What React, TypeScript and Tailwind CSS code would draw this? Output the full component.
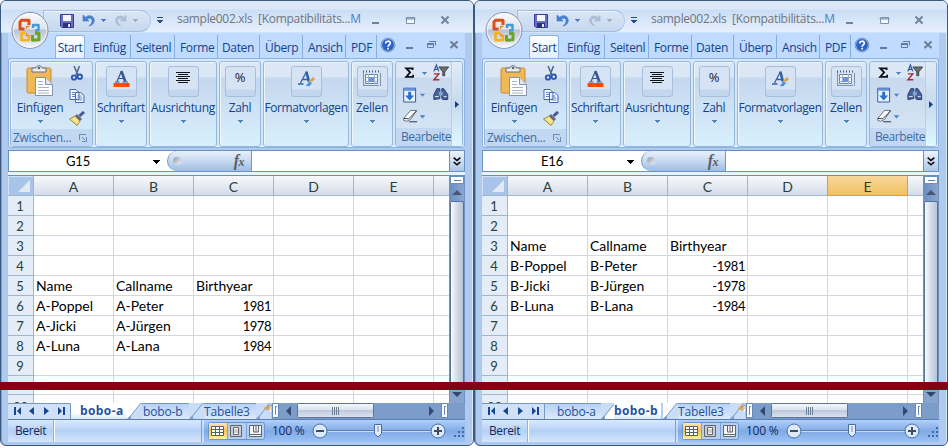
import React from 'react';

const UI = "font-['Open_Sans','Noto_Sans',sans-serif]";
const CELL = "font-['Lato',sans-serif]";

type SheetData = {
  cell: string;
  active: number;
  activeCol: string;
  start: number;
  rows: [string, string, string][];
};

const LEFT: SheetData = {
  cell: 'G15',
  active: 0,
  activeCol: '',
  start: 5,
  rows: [
    ['Name', 'Callname', 'Birthyear'],
    ['A-Poppel', 'A-Peter', '1981'],
    ['A-Jicki', 'A-Jürgen', '1978'],
    ['A-Luna', 'A-Lana', '1984'],
  ],
};

const RIGHT: SheetData = {
  cell: 'E16',
  active: 1,
  activeCol: 'E',
  start: 3,
  rows: [
    ['Name', 'Callname', 'Birthyear'],
    ['B-Poppel', 'B-Peter', '-1981'],
    ['B-Jicki', 'B-Jürgen', '-1978'],
    ['B-Luna', 'B-Lana', '-1984'],
  ],
};

function Down({ className = 'text-[#4f7fbd]' }: { className?: string }) {
  return (
    <svg width="5" height="3" viewBox="0 0 5 3" className={`shrink-0 ${className}`} shapeRendering="crispEdges">
      <path d="M0 0h5v1H0zM1 1h3v1H1zM2 2h1v1H2z" fill="currentColor" />
    </svg>
  );
}

function OfficeButton() {
  return (
    <svg width="38" height="38" viewBox="0 0 38 38" className="absolute left-[10px] top-[10px] z-10">
      <defs>
        <linearGradient id="orb" x1="0" y1="0" x2="0" y2="1">
          <stop offset="0" stopColor="#f8fafc" />
          <stop offset=".45" stopColor="#dfe4ec" />
          <stop offset=".5" stopColor="#b9c3d3" />
          <stop offset="1" stopColor="#f6fafe" />
        </linearGradient>
      </defs>
      <circle cx="19" cy="19.4" r="18" fill="url(#orb)" stroke="#8591a8" />
      <circle cx="19" cy="19.4" r="16.8" fill="none" stroke="#fff" strokeOpacity=".7" />
      <g fill="none" strokeWidth="3" strokeLinejoin="round">
        <path d="M13.500 18H9v-7l1.500-1.800h7.500V14" stroke="#dc4f16" />
        <path d="M22 17v-3h5.500v5.500H24" stroke="#3f9bd8" strokeWidth="2.400" />
        <path d="M14.500 22h-4v7.300h7.500V24" stroke="#f4b31c" strokeWidth="2.600" />
        <path d="M21.500 24v5.300l6.500-.5v-6.300h-4" stroke="#69a52b" />
        <path d="M15.500 18v-2.500h3M15.500 22v2.500h3" stroke="#e98a2b" strokeWidth="1.300" />
      </g>
    </svg>
  );
}

function TitleBar() {
  return (
    <div className="relative flex h-8 shrink-0 items-center border-b border-[#cfe3fb] bg-linear-to-b from-[#dce8f8] from-[8px] via-[#cbdef6] via-[9px] to-[#e6f0fc]">
      <div className="ml-[42px] mt-[8px] flex h-[22px] w-[108px] shrink-0 items-center rounded-r-full rounded-tl-[6px] border border-[#a4bfe2] border-r-[#b5caea] bg-linear-to-b from-[#dae6f6] to-[#c6d8f0] shadow-[inset_0_1px_0_#eef5fd]">
        <svg width="14" height="14" viewBox="0 0 14 14" className="ml-[16px] shrink-0">
          <path d="M.5.5h13v13H2l-1.500-1.500z" fill="#6870c4" stroke="#3a3f94" />
          <path d="M3 1h8v6H3z" fill="#f5f7ff" />
          <path d="M3 9h8v4.500H3z" fill="#2c3080" />
          <path d="M8 10h2v3H8z" fill="#e3e8fa" />
        </svg>
        <svg width="14" height="14" viewBox="0 0 14 14" className="ml-[8px] shrink-0">
          <path d="M1 1v6h6L5 5c3-2 6 0 5 3-.5 2-2 3-3 4 4-1 6-4 5-7C11 1.500 7 .500 3.500 3.300z" fill="#4b84d4" stroke="#2c62b4" strokeWidth=".5" />
        </svg>
        <div className="ml-[5px]"><Down /></div>
        <svg width="13" height="14" viewBox="0 0 14 14" className="ml-[8px] shrink-0 -scale-x-100">
          <path d="M1 1v6h6L5 5c3-2 6 0 5 3-.5 2-2 3-3 4 4-1 6-4 5-7C11 1.500 7 .500 3.500 3.300z" fill="#b5c3d8" stroke="#98a9c3" strokeWidth=".5" />
        </svg>
        <div className="ml-[6px]"><Down className="text-[#a8a9ad]" /></div>
      </div>
      <svg width="6" height="7" viewBox="0 0 6 7" className="ml-[6px] mt-[7px] shrink-0" shapeRendering="crispEdges">
        <path d="M0 0h6v1H0zM0 3h6v1H0zM1 4h4v1H1zM2 5h2v1H2z" fill="#234a8b" />
      </svg>
      <div className={`${UI} ml-[14px] mt-[4px] w-[185px] shrink-0 whitespace-pre text-[12px] tracking-[-0.300px] text-[#70757d]`}>
        sample002.xls  [Kompatibilitäts...<span className="text-[#4c7fc0]">M</span>
      </div>
      <svg width="79" height="12" viewBox="0 0 79 12" className="ml-[10px] mt-[7px] shrink-0 text-[#70839d]">
        <path d="M0 8h7v2H0z" fill="currentColor" />
        <path d="M34.500 3.500h8v6h-8zM34 4h9v1h-9z" fill="#f5f9ff" stroke="#7c90b0" />
        <path d="M69.500 2.500l7 7M76.500 2.500l-7 7" stroke="currentColor" strokeWidth="2" />
      </svg>
    </div>
  );
}

const TABS: { label: string; box: string }[] = [
  { label: 'Einfüg', box: 'w-[43px] pl-[5px]' },
  { label: 'Seitenl', box: 'w-[44px] pl-[5px]' },
  { label: 'Forme', box: 'w-[43px] pl-[5px]' },
  { label: 'Daten', box: 'w-[42px] pl-[4px]' },
  { label: 'Überp', box: 'w-[43px] pl-[5px]' },
  { label: 'Ansich', box: 'w-[43px] pl-[5px]' },
  { label: 'PDF', box: 'w-[31px] pl-[5px]' },
];

function RibbonTabs() {
  return (
    <div className={`${UI} flex h-[25px] shrink-0 items-end bg-[#bfdbff] text-[12px] tracking-[-0.350px] text-[#15428b]`}>
      <div className="ml-[47px] mr-[3px] flex h-[23px] w-[30px] shrink-0 items-center justify-center rounded-t-[3px] border border-b-0 border-[#8db2e3] bg-linear-to-b from-white to-[#e3effc] pt-px tracking-[-0.450px]">
        Start
      </div>
      {TABS.map((t) => (
        <div key={t.label} className={`${t.box} flex h-[23px] shrink-0 items-center border-r border-[#86aedb] pt-[2px] whitespace-nowrap`}>
          {t.label}
        </div>
      ))}
      <svg width="85" height="23" viewBox="0 0 85 23" className="shrink-0">
        <circle cx="11" cy="10" r="6.500" fill="#2b62c7" stroke="#d7e6fa" />
        <circle cx="11" cy="10" r="6.900" fill="none" stroke="#466fb1" strokeWidth=".7" />
        <path d="M8.700 8.500c0-3 4.800-3 4.600-.2-.2 1.500-2.200 1.600-2.200 3.400M11.100 12.800v1.600" fill="none" stroke="#fff" strokeWidth="1.700" />
        <path d="M29 12h7v2h-7z" fill="#687c99" />
        <path d="M52.500 6.500h6v4M50.500 8.500h6v4h-6z" fill="none" stroke="#687c99" />
        <path d="M50 8h7v2h-7zM52 6h7v1h-7z" fill="#687c99" />
        <path d="M73.500 6.500l7 6.500M80.500 6.500l-7 6.500" stroke="#6b7c94" strokeWidth="2" />
      </svg>
    </div>
  );
}

const GROUP =
  'flex h-[86px] shrink-0 flex-col items-center rounded-[3px] border border-[#95b8d9] bg-linear-to-b from-[#dce7f5] from-[15px] via-[#c5d7ee] via-[16px] to-[#d8f0fd] shadow-[inset_1px_1px_0_#edf5fd]';

function BigGroup({ label, width, children }: { label: string; width: string; children: React.ReactNode }) {
  return (
    <div className={`${GROUP} ${width}`}>
      <div className="mt-[4px] flex h-[31px] w-[31px] shrink-0 items-center justify-center rounded-[3px] border border-[#a5bfdd] bg-linear-to-b from-[#d5e3f4] from-[22px] to-[#c2d6ed] to-[23px]">
        {children}
      </div>
      <div className="mt-[2px] whitespace-nowrap leading-[17px]">{label}</div>
      <div className="mt-[4px]"><Down /></div>
    </div>
  );
}

function PasteIcon() {
  return (
    <svg width="28" height="31" viewBox="0 0 28 31">
      <rect x="1" y="3" width="24" height="25" rx="1.500" fill="#f1b856" stroke="#c58c35" />
      <path d="M6 7V3h4c0-3 6-3 6 0h4v4z" fill="#e9eef3" stroke="#68737f" />
      <circle cx="13" cy="3" r="1.300" fill="#5d6875" />
      <path d="M9.500 12.500h10l7 7v11h-17z" fill="#fff" stroke="#8493ad" />
      <path d="M19.500 12.500v7h7" fill="#dce6f4" stroke="#8493ad" />
      <path d="M12 16.500h5M12 19.500h5M12 22.500h11M12 25.500h11M12 28h11" stroke="#a4b3cb" />
    </svg>
  );
}

function Ribbon() {
  return (
    <div className={`${UI} flex h-[90px] shrink-0 gap-[2px] rounded-[3px] border border-[#8db2e3] bg-[#d5e8fa] px-[1px] pt-[2px] text-[12px] tracking-[-0.300px] text-[#15428b] shadow-[inset_0_-2px_0_#d7f8ff,inset_1px_0_0_#e4f2ff]`}>
      <div className={`${GROUP} w-[83px] overflow-hidden`}>
        <div className="flex h-[67px] w-full">
          <div className="ml-[5px] flex w-[48px] flex-col items-center">
            <div className="mt-[3px] h-[31px]"><PasteIcon /></div>
            <div className="mt-[3px] leading-[17px]">Einfügen</div>
            <div className="mt-[4px]"><Down /></div>
          </div>
          <div className="ml-[5px] flex flex-col items-center">
            <svg width="14" height="15" viewBox="0 0 14 15" className="mt-[4px]">
              <path d="M4 0l4 9M9.500 0L6 9" stroke="#536b91" strokeWidth="1.600" />
              <circle cx="4" cy="11.500" r="2.200" fill="none" stroke="#2855b5" strokeWidth="1.800" />
              <circle cx="9.800" cy="10.700" r="2.200" fill="none" stroke="#2855b5" strokeWidth="1.800" />
            </svg>
            <svg width="16" height="14" viewBox="0 0 16 14" className="mt-[8px]">
              <path d="M1 .5h6l3 3v7H1zM6.500 3.500h5l3.500 3v7H6.500z" fill="#f7faff" stroke="#3d67b2" />
              <path d="M3 3.500h3M3 5.500h3M3 7.500h3M8.500 7h4M8.500 9h5M8.500 11h5" stroke="#6489cb" />
            </svg>
            <svg width="16" height="15" viewBox="0 0 16 15" className="mt-[8px]">
              <path d="M15 1l-4.500 4" stroke="#4c5590" strokeWidth="3" />
              <path d="M8 3l5 5-2 2-5-5z" fill="#5f678a" />
              <path d="M6 5l5 5-3 4.500L.5 8z" fill="#f3df7e" stroke="#9c8544" />
              <path d="M4.500 7l5 5" stroke="#fff3b4" />
            </svg>
          </div>
        </div>
        <div className="flex h-[17px] w-full items-center bg-[#c1d8f0] pl-[2px] text-[#3e6aaa]">
          <span className="w-[66px] whitespace-nowrap tracking-[-0.300px]">Zwischen...</span>
          <svg width="8" height="8" viewBox="0 0 8 8" shapeRendering="crispEdges">
            <path d="M.5 6V.5H7M3 3l3 3M7.500 3v4.500H3" fill="none" stroke="#668eb9" />
          </svg>
        </div>
      </div>
      <BigGroup label="Schriftart" width="w-[52px] tracking-[-0.400px]">
        <svg width="17" height="17" viewBox="0 0 17 17" className="-mt-[6px]">
          <path d="M4 11.500L8.300 1.500" fill="none" stroke="#345692" strokeWidth="1.200" />
          <path d="M8.300 1l4 10.500" fill="none" stroke="#345692" strokeWidth="2.600" />
          <path d="M5 8.500h6M2 12h4.500M9.500 12H15" stroke="#345692" strokeWidth="1.200" />
          <path d="M.500 13h16v4H.500z" fill="#ff4a0c" />
        </svg>
      </BigGroup>
      <BigGroup label="Ausrichtung" width="w-[68px]">
        <svg width="14" height="11" viewBox="0 0 14 11" className="-mt-[8px]" shapeRendering="crispEdges">
          <path d="M0 0h14v1H0zM2 2h10v1H2zM0 4h14v1H0zM2 6h10v1H2zM0 8h14v1H0zM2 10h10v1H2z" fill="#101418" />
        </svg>
      </BigGroup>
      <BigGroup label="Zahl" width="w-[42px]">
        <span className="-mt-[8px] text-[13px] text-[#1b2028]">%</span>
      </BigGroup>
      <BigGroup label="Formatvorlagen" width="w-[86px] tracking-[-0.400px]">
        <svg width="18" height="18" viewBox="0 0 18 18" className="-mt-[7px]">
          <path d="M3.500 14L9.300 3" fill="none" stroke="#345fa5" strokeWidth="1.300" />
          <path d="M9.300 2.500l3 11.500" fill="none" stroke="#345fa5" strokeWidth="2.600" />
          <path d="M6 10.500h5M1 15h5.500" stroke="#345fa5" strokeWidth="1.300" />
          <path d="M17 9l-4 4" stroke="#dea33c" strokeWidth="2.800" />
          <path d="M12.500 12l3 2-3 3.500H8z" fill="#4b8fdc" stroke="#e6f0fe" strokeWidth=".6" />
        </svg>
      </BigGroup>
      <BigGroup label="Zellen" width="w-[42px]">
        <svg width="18" height="17" viewBox="0 0 18 17" className="-mt-[7px]">
          <path d="M.500 1v15M17.500 3v13M1 15.500h15" stroke="#8093ac" fill="none" />
          <path d="M2.500 4.500h12v9h-12z" fill="#f7faff" stroke="#687e9e" />
          <path d="M2 7.500h13M2 11.500h13M5.500 4v10M11.500 4v10" stroke="#9dafc8" />
          <path d="M6 7h5v5H6z" fill="#6795e2" />
          <path d="M0 1.500h16" stroke="#465a79" strokeWidth="2" strokeDasharray="1 2" />
        </svg>
      </BigGroup>
      <div className="flex h-[86px] w-[68px] shrink-0 overflow-hidden rounded-[3px] border border-[#95b8d9]">
        <div className="flex w-[55px] shrink-0 flex-col bg-linear-to-b from-[#dce7f5] from-[15px] via-[#c8d9ee] via-[16px] to-[#d8e7f7]">
          <svg width="55" height="67" viewBox="0 0 55 67">
            <path d="M16.500 8V6.500H10l4 4-4 4.500h7v-2" fill="none" stroke="#0b0f16" strokeWidth="1.800" />
            <path d="M26 10h5v1h-5zM27 11h3v1h-3zM28 12h1v1h-1zM24 32h5v1h-5zM25 33h3v1h-3zM26 34h1v1h-1zM24 54h5v1h-5zM25 55h3v1h-3zM26 56h1v1h-1z" fill="#4f7fbd" />
            <path d="M38 9.500L40.500 3 43 9.500M39 7.500h3" fill="none" stroke="#3159a4" strokeWidth="1.300" />
            <path d="M38 12h5l-5 6h5.500" fill="none" stroke="#a72a35" strokeWidth="1.400" />
            <path d="M43 5h10l-4 5v4h-2v-4z" fill="#6d6e70" stroke="#303438" strokeWidth=".8" />
            <path d="M7.500 26.500h12v14h-12z" fill="#eaf2ff" stroke="#2f5ba3" />
            <path d="M8 27h11v2H8z" fill="#6290d8" />
            <path d="M12 30h3v4h3l-4.500 5L9 34h3z" fill="#2870cf" />
            <path d="M38 38v-5l3-6h3v10zM46 37v-10h2l4 6v5h-5z" fill="#46639a" stroke="#294071" />
            <path d="M43 30h4v4h-4z" fill="#88a3cd" />
            <path d="M39 35h4M48 35h3" stroke="#dbe7fb" />
            <path d="M7.500 57l7-8h6l-6 9-4 2-3-1z" fill="#fff" stroke="#657083" />
            <path d="M7.500 57l5 .5 8-8M13 60.500h8" fill="none" stroke="#333941" />
          </svg>
          <div className="h-[18px] whitespace-nowrap bg-[#c1d8f0] pl-[5px] leading-[17px] tracking-[-0.450px] text-[#3e6aaa]">Bearbeite</div>
        </div>
        <div className="flex w-[11px] items-center justify-center border-l border-[#b8cfe5] bg-linear-to-b from-[#e1ebf7] via-[#c8daef] to-[#dff8ff]">
          <svg width="4" height="7" viewBox="0 0 4 7"><path d="M0 0l4 3.500L0 7z" fill="#173f88" /></svg>
        </div>
      </div>
    </div>
  );
}

function FormulaBar({ cell }: { cell: string }) {
  return (
    <div className="mt-[2px] flex h-[22px] shrink-0 border border-[#6593bd] bg-white">
      <div className={`${CELL} flex w-[158px] items-center text-[13px] tracking-[-0.200px] text-black`}>
        <span className="ml-[28px] w-[82px] pt-px text-center">{cell}</span>
        <svg width="7" height="4" viewBox="0 0 7 4" className="ml-[34px] mt-px" shapeRendering="crispEdges">
          <path d="M0 0h7v1H0zM1 1h5v1H1zM2 2h3v1H2zM3 3h1v1H3z" fill="#000" />
        </svg>
      </div>
      <div className="flex w-[84px] items-center justify-between rounded-l-full border-l border-[#6f96be] bg-linear-to-b from-[#e8f0fb] via-[#c7d9f1] to-[#9dbde6] pl-[5px] pr-[7px]">
        <div className="h-[8px] w-[8px] rounded-full bg-linear-to-br from-[#929dac] to-[#f0f3f8]" />
        <span className="font-['Liberation_Serif',serif] text-[16px] font-bold italic leading-none tracking-[-0.500px] text-[#5a5e66]">
          f<span className="text-[12px]">x</span>
        </span>
      </div>
      <div className="flex-1 border-l border-[#7099c2] bg-white" />
      <div className="flex w-[15px] items-center justify-center border-l border-[#6593bd] bg-linear-to-b from-[#edf4fc] to-[#adc7e9]">
        <svg width="8" height="9" viewBox="0 0 8 9">
          <path d="M.7.700L4 3.500 7.300.700M.700 5L4 7.800 7.300 5" fill="none" stroke="#000" strokeWidth="1.600" />
        </svg>
      </div>
    </div>
  );
}

const COLS = ['A', 'B', 'C', 'D', 'E'];

function Grid({ data }: { data: SheetData }) {
  return (
    <div className={`${CELL} flex h-[206px] shrink-0 overflow-hidden bg-white`}>
      <div className="w-[441px] shrink-0">
        <div className="flex h-[20px] text-[14px] text-[#27413e]">
          <div className="flex w-[26px] items-end justify-end border-b border-r border-[#9eb6ce] bg-[#a9c4e9] p-[3px] shadow-[inset_1px_1px_0_#d2e2f7]">
            <svg width="12" height="12" viewBox="0 0 12 12"><path d="M12 0v12H0z" fill="#e3e9f2" /></svg>
          </div>
          {COLS.map((c, i) => (
            <div
              key={c}
              className={`flex w-[80px] items-center justify-center border-b border-r pt-px ${
                c === data.activeCol
                  ? 'border-[#f29536] bg-linear-to-b from-[#f8d79b] to-[#f1c15f]'
                  : 'border-[#9eb6ce] bg-linear-to-b from-[#f7f9fc] to-[#d5dde9]'
              } ${data.activeCol && COLS[i + 1] === data.activeCol ? 'border-r-[#f29536]' : ''}`}
            >
              {c}
            </div>
          ))}
          <div className="flex-1 border-b border-[#9eb6ce] bg-linear-to-b from-[#f7f9fc] to-[#d5dde9]" />
        </div>
        {Array.from({ length: 10 }, (_, i) => {
          const row = data.rows[i + 1 - data.start];
          return (
            <div key={i} className="flex h-[20px] text-[14px] leading-[20px] text-black">
              <div className="w-[26px] border-b border-r border-[#9eb6ce] bg-[#e4ecf7] pr-[1px] text-center text-[13px] leading-[21px] text-[#27413e]">{i < 9 ? i + 1 : ''}</div>
              {COLS.map((c, j) => (
                <div
                  key={c}
                  className={`w-[80px] whitespace-nowrap border-b border-r border-[#d0d7e5] ${
                    j === 2 && i + 1 > data.start ? 'pr-[2px] text-right text-[13px] leading-[21px] tracking-[-0.450px]' : 'px-[2px]'
                  }`}
                >
                  {row?.[j]}
                </div>
              ))}
              <div className="flex-1 border-b border-[#d0d7e5]" />
            </div>
          );
        })}
      </div>
      <div className="flex w-[16px] shrink-0 flex-col border-x border-[#6e91bd] bg-[#86a4ce]">
        <div className="flex h-[8px] shrink-0 items-center justify-center border border-[#6593bd] bg-white"><div className="h-px w-[7px] bg-[#537fad]" /></div>
        <div className="flex h-[17px] shrink-0 items-center justify-center bg-linear-to-r from-[#6c8fc2] to-[#88a6d0]">
          <svg width="10" height="5" viewBox="0 0 10 5"><path d="M0 5l5-5 5 5z" fill="#4a5371" /></svg>
        </div>
        <div className="flex-1 rounded-t-[2px] border border-b-0 border-[#55729a] bg-linear-to-r from-[#fafbfc] via-[#d3dbe6] to-[#b7c5d8]" />
      </div>
    </div>
  );
}

function LowerRows() {
  return (
    <div className={`${CELL} flex h-[13px] shrink-0 overflow-hidden bg-white text-[13px] text-[#27413e]`}>
      <div className="w-[26px] border-r border-[#9eb6ce] bg-[#e4ecf7]">
        <div className="h-[5px] border-b border-[#9eb6ce]" />
        <div className="mt-[3px] h-[5px] overflow-hidden text-center leading-[18px]">22</div>
      </div>
      {COLS.map((c) => (
        <div key={c} className="w-[80px] border-r border-[#d0d7e5]"><div className="h-[5px] border-b border-[#d0d7e5]" /></div>
      ))}
      <div className="w-[15px]"><div className="h-[5px] border-b border-[#d0d7e5]" /></div>
      <div className="flex w-[16px] justify-center border-x border-[#6e91bd] bg-[#86a4ce] pt-[2px]">
        <svg width="10" height="5" viewBox="0 0 10 5"><path d="M0 0l5 5 5-5z" fill="#33476d" /></svg>
      </div>
    </div>
  );
}

function Slant({ left, right }: { left: string; right: string }) {
  return (
    <svg width="15" height="16" viewBox="0 0 15 16" className="shrink-0">
      <path d="M0 0h15v16H0z" fill={right} />
      <path d="M0 0h14L4 13 1 16H0z" fill={left} />
      <path d="M14.500 .5h-1L4 12.500 1 15.500" fill="none" stroke="#7598c4" />
      <path d="M0 16l4-4v4z" fill="#819fca" />
    </svg>
  );
}

const ON = '#ffffff';
const OFF = '#c9ddf7';

function SheetTabs({ active }: { active: number }) {
  const regular = 'bg-linear-to-b from-[#b8d2f4] to-[#dce9fb] border-t border-[#7598c4]';
  const bold = 'bg-linear-to-b from-white from-60% to-[#d7e7fc] font-bold tracking-[0.400px]';
  return (
    <div className={`${UI} flex h-[16px] shrink-0 bg-[#b5cef1] text-[12px] leading-[16px] tracking-[-0.150px] text-[#24519c]`}>
      <svg width="63" height="16" viewBox="0 0 63 16" className="shrink-0">
        <path d="M0 0h63v16H0z" fill="#cfe0f7" />
        <path d="M0 .5h62.500V16" fill="none" stroke="#7598c4" />
        <path d="M6 4h2v8H6zM13 4v8L9 8zM26 4v8l-5-4zM36 4v8l5-4zM50 4v8l4-4zM55 4h2v8h-2z" fill="#17458f" />
      </svg>
      <div className={`w-[56px] shrink-0 ${active === 0 ? `${bold} pl-[9px]` : `${regular} pl-[12px] leading-[15px]`}`}>bobo-a</div>
      <Slant left={active === 0 ? ON : OFF} right={active === 1 ? ON : OFF} />
      <div className={`w-[47px] shrink-0 ${active === 1 ? `${bold} -ml-[2px] mr-[2px]` : `${regular} pl-px leading-[15px]`}`}>bobo-b</div>
      <Slant left={active === 1 ? ON : OFF} right={OFF} />
      <div className={`${regular} w-[52px] shrink-0 leading-[15px]`}>Tabelle3</div>
      <Slant left={OFF} right={OFF} />
      <svg width="10" height="16" viewBox="0 0 10 16" className="-ml-[9px] shrink-0">
        <path d="M5 4l5-2v9" fill="#f9fbff" stroke="#7595c2" />
        <path d="M4 3l4 4M8 3L4 7M6 1v7M2 5h7" stroke="#de9c43" />
      </svg>
      <svg width="176" height="16" viewBox="0 0 176 16" className="shrink-0">
        <defs>
          <linearGradient id="thumb" x1="0" x2="0" y1="0" y2="1">
            <stop offset="0" stopColor="#f7f9fc" /><stop offset=".45" stopColor="#dce3ee" /><stop offset=".5" stopColor="#bdcadd" /><stop offset="1" stopColor="#dbe3ee" />
          </linearGradient>
        </defs>
        <path d="M0 0h176v16H0z" fill="#7c9cc9" />
        <path d="M.500.500h6v14h-6zM169.500.500h6v14h-6z" fill="#ffffff" stroke="#6289bb" />
        <path d="M3 3.500h2M3.500 3v9M172 3.500h2M172.500 3v9" fill="none" stroke="#648bbb" />
        <path d="M19 3v10l-5-5zM157 3v10l5-5z" fill="#35496e" />
        <rect x="25.500" y=".5" width="76" height="14" rx="1" fill="url(#thumb)" stroke="#58759d" />
        <path d="M60.500 4v8M62.500 4v8M64.500 4v8M66.500 4v8" stroke="#6e7f98" />
      </svg>
      <div className="flex-1 bg-[#7c9cc9]" />
    </div>
  );
}

function StatusBar() {
  return (
    <div className={`${UI} flex h-[22px] shrink-0 bg-linear-to-b from-[#d9e9fd] via-[#b4d0f5] to-[#d5e6fc] text-[12px] text-[#15295f]`}>
      <div className="flex w-[46px] items-center border-r border-[#8fb3e1] pb-px pl-[7px] tracking-[-0.400px]">Bereit</div>
      <div className="w-[148px] border-l border-r border-l-white border-r-[#7fa2d0]" />
      <div className="ml-[2px] flex flex-1 items-center bg-linear-to-b from-[#b2d0fb] from-0% via-[#80aae5] via-50% to-[#9dc2f5] pb-px">
        <svg width="60" height="18" viewBox="0 0 60 18" className="ml-[4px] shrink-0">
          <defs>
            <linearGradient id="sel" x1="0" x2="0" y1="0" y2="1"><stop offset="0" stopColor="#fde7b0" /><stop offset=".5" stopColor="#fbc059" /><stop offset="1" stopColor="#fff0a2" /></linearGradient>
          </defs>
          <rect x=".500" y=".500" width="56" height="17" rx="2" fill="#b5cff2" stroke="#6c94c9" />
          <path d="M1 1h18v16H1z" fill="url(#sel)" />
          <path d="M19.500 1v16M38.500 1v16" stroke="#7fa2d0" />
          <path d="M3.500 4.500h12v9h-12zM3 7.500h13M3 10.500h13M7.500 4v10M11.500 4v10" fill="#fff" stroke="#57616e" />
          <path d="M22.500 3.500h11v11h-11z" fill="#c9cdd3" stroke="#62666c" />
          <path d="M25.500 5.500h5v7h-5z" fill="#fff" stroke="#62666c" />
          <path d="M26 8h4M26 10h4" stroke="#9a9da2" />
          <path d="M41.500 3.500h12v11h-12z" fill="#f4f5f7" stroke="#62666c" />
          <path d="M41 12.500h13M45.500 3v7h5V3M48 3v7" fill="none" stroke="#62666c" />
        </svg>
        <span className="w-[43px] shrink-0 whitespace-nowrap pl-[4px] tracking-[-0.250px]">100 %</span>
        <svg width="135" height="20" viewBox="0 0 135 20" className="shrink-0">
          <path d="M10 9.500h116" stroke="#5c7fb3" />
          <path d="M10 10.500h116" stroke="#c6dcf9" />
          <circle cx="9" cy="10" r="7" fill="#dce9fb" stroke="#486fa6" />
          <circle cx="127" cy="10" r="7" fill="#dce9fb" stroke="#486fa6" />
          <path d="M5 10h8M123 10h8M127 6v8" stroke="#3e4d66" strokeWidth="2" />
          <path d="M63.500 3.500h7v9l-3.500 3.500-3.500-3.500z" fill="#e3edfb" stroke="#4a6d9e" />
          <path d="M67 5v6" stroke="#7891b4" />
        </svg>
        <svg width="10" height="14" viewBox="0 0 10 14" className="ml-[8px] mt-[4px] shrink-0">
          <path d="M8 1h2v2H8zM4 5h2v2H4zM8 5h2v2H8zM0 9h2v2H0zM4 9h2v2H4zM8 9h2v2H8z" fill="#426ca9" />
        </svg>
      </div>
    </div>
  );
}

function Window({ data }: { data: SheetData }) {
  return (
    <div className="relative flex h-[446px] w-[474px] shrink-0 flex-col overflow-hidden rounded-[6px] border border-[#3b5a82] bg-[#b0c9ef] shadow-[inset_1px_0_0_#7f9dc6,inset_-1px_0_0_#dbe9fc]">
      <OfficeButton />
      <TitleBar />
      <div className="flex flex-1 flex-col pl-[7px] pr-[8px]">
        <RibbonTabs />
        <Ribbon />
        <FormulaBar cell={data.cell} />
        <div className="h-[4px] shrink-0 border-b border-[#6593bd] bg-[#e9f1fb]" />
        <Grid data={data} />
        <div className="h-[8px] shrink-0" />
        <LowerRows />
        <SheetTabs active={data.active} />
        <div className="h-px shrink-0 bg-[#567fb4]" />
        <StatusBar />
      </div>
    </div>
  );
}

export default function App() {
  return (
    <div className="relative flex h-[448px] w-[948px] overflow-hidden bg-white">
      <Window data={LEFT} />
      <Window data={RIGHT} />
      <div className="absolute left-0 top-[382px] h-[8px] w-[948px] bg-[#840014]" />
    </div>
  );
}
